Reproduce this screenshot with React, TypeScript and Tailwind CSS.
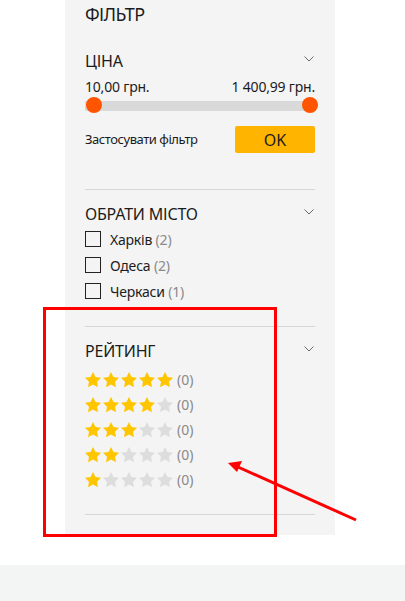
import React from "react";

const Chevron = () => (
  <svg width="10" height="6" viewBox="0 0 10 6" className="mt-[7px] mr-[1px]">
    <polyline points="0.5,0.5 5,5 9.5,0.5" fill="none" stroke="#6b6b6b" strokeWidth="1" />
  </svg>
);

const Star = ({ filled }: { filled: boolean }) => (
  <svg width="16" height="16" viewBox="2 2 20 20">
    <path
      d="M12 2l3.09 6.26L22 9.27l-5 4.87 1.18 6.88L12 17.77l-6.18 3.25L7 14.14 2 9.27l6.91-1.01L12 2z"
      fill={filled ? "#ffc600" : "#dddddd"}
    />
  </svg>
);

const Heading = ({ title, className }: { title: string; className?: string }) => (
  <div className={"flex justify-between items-start h-[24px] " + (className ?? "")}>
    <span className="text-[16px] leading-[24px] tracking-[-0.2px] text-[#1c1c1c]">{title}</span>
    <Chevron />
  </div>
);

export default function App() {
  const cities = [
    { name: "Харків", n: 2 },
    { name: "Одеса", n: 2 },
    { name: "Черкаси", n: 1 },
  ];
  return (
    <div
      className="relative h-[601px] w-[405px] overflow-hidden bg-white"
      style={{ fontFamily: '"Noto Sans", "Open Sans", sans-serif' }}
    >
      <div className="ml-[65px] w-[270px] bg-[#f4f4f4] px-5 pt-[1px] pb-5">
        <div className="text-[18px] leading-[26px] tracking-[-0.6px] text-[#1c1c1c]">ФІЛЬТР</div>

        <Heading title="ЦІНА" className="mt-[22px]" />
        <div className="mt-[4px] flex justify-between text-[14px] leading-[20px] tracking-[-0.2px] text-[#1c1c1c]">
          <span>10,00 грн.</span>
          <span>1 400,99 грн.</span>
        </div>
        <div className="relative h-[16px]">
          <div className="absolute left-0 right-[2px] top-[4px] h-[10px] bg-[#d9d9d9]" />
          <div className="absolute left-[1px] top-0 h-[16px] w-[16px] rounded-full bg-[#ff5400]" />
          <div className="absolute right-[-3px] top-0 h-[16px] w-[16px] rounded-full bg-[#ff5400]" />
        </div>
        <div className="mt-[13px] flex h-[27px] items-center justify-between">
          <span className="text-[13px] tracking-[-0.45px] text-[#1c1c1c]">Застосувати фільтр</span>
          <button className="h-[27px] w-[80px] rounded-[2px] bg-[#ffb400] text-[16px] text-[#1c1c1c]">
            OK
          </button>
        </div>

        <div className="mt-[36px] h-px bg-[#d6d6d6]" />

        <Heading title="ОБРАТИ МІСТО" className="mt-[12px]" />
        <div className="flex flex-col">
          {cities.map((c) => (
            <div key={c.name} className="flex h-[26px] items-center gap-[9px]">
              <div className="h-[16px] w-[16px] border border-[#222]" />
              <span className="text-[14px] tracking-[-0.2px] text-[#1c1c1c]">
                {c.name} <span className="text-[#8a8a8a]">({c.n})</span>
              </span>
            </div>
          ))}
        </div>

        <div className="mt-[22px] h-px bg-[#d6d6d6]" />

        <Heading title="РЕЙТИНГ" className="mt-[12px]" />
        <div className="mt-[4px] flex flex-col">
          {[5, 4, 3, 2, 1].map((r) => (
            <div key={r} className="flex h-[25px] items-center">
              <div className="flex gap-[2px]">
                {[1, 2, 3, 4, 5].map((i) => (
                  <Star key={i} filled={i <= r} />
                ))}
              </div>
              <span className="ml-[4px] text-[14px] leading-[18px] text-[#8a8a8a]">(0)</span>
            </div>
          ))}
        </div>

        <div className="mt-[22px] h-px bg-[#d6d6d6]" />
      </div>

      <div className="mt-[30px] h-[36px] bg-[#f3f4f4]" />

      <svg className="pointer-events-none absolute left-0 top-0" width="405" height="601">
        <rect x="44.5" y="308.5" width="231" height="227" fill="none" stroke="#ff0000" strokeWidth="3" />
        <line x1="356" y1="520" x2="238" y2="467" stroke="#ff0000" strokeWidth="3" />
        <polygon points="228,463 242,461 237,472" fill="#ff0000" />
      </svg>
    </div>
  );
}
